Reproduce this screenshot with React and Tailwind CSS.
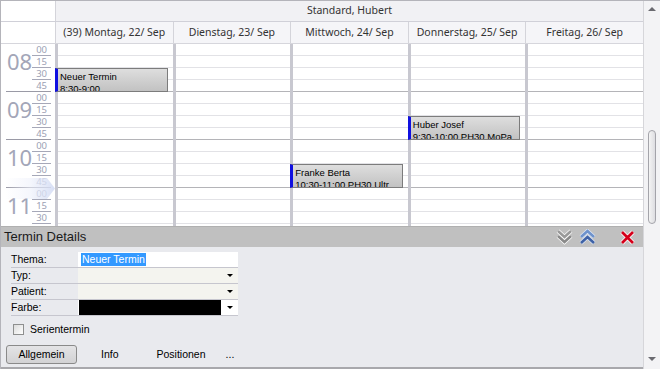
import React from "react";

const days = [
  "(39) Montag, 22/ Sep",
  "Dienstag, 23/ Sep",
  "Mittwoch, 24/ Sep",
  "Donnerstag, 25/ Sep",
  "Freitag, 26/ Sep",
];

// only the visible part of the day: 08:00 - 11:30
const hours = [
  { h: "08", m: ["00", "15", "30", "45"] },
  { h: "09", m: ["00", "15", "30", "45"] },
  { h: "10", m: ["00", "15", "30", "45"] },
  { h: "11", m: ["00", "15", "30"] },
];

// top offset in px from 08:00, 48px per hour
const appointments = [
  { day: 0, top: 24, title: "Neuer Termin", sub: "8:30-9:00" },
  { day: 2, top: 120, title: "Franke Berta", sub: "10:30-11:00 PH30 Ultr" },
  { day: 3, top: 72, title: "Huber Josef", sub: "9:30-10:00 PH30 MoPa" },
];

const head = { fontFamily: '"Noto Sans", "Open Sans", sans-serif' };
const ui = { fontFamily: '"Liberation Sans", Arial, sans-serif' };

const ChevronsDown = () => (
  <svg width="17" height="16" viewBox="0 0 17 16">
    <polyline points="2,2 8.5,8 15,2" fill="none" stroke="#ffffff" strokeWidth="4" />
    <polyline points="2,7 8.5,13 15,7" fill="none" stroke="#ffffff" strokeWidth="4" />
    <polyline points="2,2 8.5,8 15,2" fill="none" stroke="#9a9a9a" strokeWidth="2.6" />
    <polyline points="2,7 8.5,13 15,7" fill="none" stroke="#8a8a8a" strokeWidth="2.6" />
  </svg>
);

const ChevronsUp = () => (
  <svg width="17" height="16" viewBox="0 0 17 16">
    <polyline points="2,8 8.5,2 15,8" fill="none" stroke="#dfe8f6" strokeWidth="4" />
    <polyline points="2,14 8.5,8 15,14" fill="none" stroke="#dfe8f6" strokeWidth="4" />
    <polyline points="2,8 8.5,2 15,8" fill="none" stroke="#6f93cc" strokeWidth="2.6" />
    <polyline points="2,14 8.5,8 15,14" fill="none" stroke="#3f62a6" strokeWidth="2.6" />
  </svg>
);

const CloseX = () => (
  <svg width="15" height="15" viewBox="0 0 15 15">
    <path d="M2 2 L13 13 M13 2 L2 13" stroke="#ffffff" strokeWidth="4.4" />
    <path d="M2 2 L13 13 M13 2 L2 13" stroke="#d4001a" strokeWidth="2.8" />
  </svg>
);

const Arrow = () => (
  <span className="w-0 h-0 border-l-[3px] border-r-[3px] border-t-[3px] border-l-transparent border-r-transparent border-t-black" />
);

function TimeColumn() {
  return (
    <div className="relative w-[54px] bg-white">
      {hours.map(({ h, m }) => (
        <div
          key={h}
          className={
            "ml-[5px] mr-[4px] flex " +
            (m.length === 4 ? "h-[48px] border-b border-[#9a9aa6]" : "h-[40px]")
          }
        >
          <div
            className="w-[26px] pt-[6px] pl-[1px] text-[22px] leading-[22px] text-[#a3a6b8]"
            style={head}
          >
            {h}
          </div>
          <div className="flex-1 flex flex-col">
            {m.map((min, i) => (
              <div
                key={min}
                className={
                  "h-[12px] pr-[4px] text-right text-[9.5px] leading-[12px] text-[#9c9fb4] " +
                  (i < 3 ? "border-b border-[#a6a8b8]" : "")
                }
                style={head}
              >
                {min}
              </div>
            ))}
          </div>
        </div>
      ))}
      <div className="absolute left-[4px] top-[134px] h-[21px] w-[50px] bg-gradient-to-r from-white/0 via-[#eef1fb]/60 to-[#d4dcf4]/90 [clip-path:polygon(0_0,84%_0,100%_50%,84%_100%,0_100%)]" />
    </div>
  );
}

function DayColumn({ index }) {
  const rows = Array.from({ length: 16 });
  return (
    <div className="relative flex-1 border-l-[3px] border-[#c8c8d0] bg-white">
      {rows.map((_, i) => (
        <div
          key={i}
          className={
            "h-[12px] border-b " +
            (i % 4 === 3 ? "border-[#b4b4b8]" : "border-[#e2e2e6]")
          }
        />
      ))}
      {appointments
        .filter((a) => a.day === index)
        .map((a) => (
          <div
            key={a.title}
            className="absolute left-[-3px] right-[5px] h-[24px] overflow-hidden border border-l-[3px] border-[#7c7c7c] border-l-[#1010e0] bg-gradient-to-b from-[#dedede] to-[#c2c2c2] pl-[2px] pt-[2px] text-[9.5px] leading-[12px] text-black"
            style={{ top: a.top, ...ui }}
          >
            <div className="whitespace-nowrap">{a.title}</div>
            <div className="whitespace-nowrap">{a.sub}</div>
          </div>
        ))}
    </div>
  );
}

function Calendar() {
  return (
    <div className="flex h-[225px] flex-col">
      <div className="flex h-[21px] border-b border-[#d0d0d8]">
        <div className="w-[54px] bg-white" />
        <div
          className="flex flex-1 items-center justify-center border-l border-[#d4d4da] bg-[#f1f1f4] text-[10.5px] text-[#333]"
          style={head}
        >
          Standard, Hubert
        </div>
      </div>
      <div className="flex h-[22px] border-b border-[#d6d6dc]">
        <div className="w-[54px] bg-white" />
        {days.map((d) => (
          <div
            key={d}
            className="flex flex-1 items-center justify-center border-l border-[#d4d4da] bg-[#f5f5f8] text-[10.5px] text-[#333] whitespace-nowrap"
            style={head}
          >
            {d}
          </div>
        ))}
      </div>
      <div className="flex flex-1 overflow-hidden">
        <TimeColumn />
        {days.map((d, i) => (
          <DayColumn key={d} index={i} />
        ))}
      </div>
    </div>
  );
}

function FormRow({ label, children }) {
  return (
    <div className="flex h-[16px] border-b border-[#c6c6ce]">
      <div className="w-[67px] text-[10.5px] leading-[15px] text-black">{label}</div>
      <div className="flex flex-1">{children}</div>
    </div>
  );
}

function Details() {
  return (
    <div className="flex flex-1 flex-col border-b-2 border-[#a8a8ac] bg-[#e9eaee]" style={ui}>
      <div className="flex h-[21px] items-center border-t border-[#b0b0b0] bg-[#c0c0c0] pl-[3px] pr-[8px]">
        <div className="flex-1 text-[13px] text-[#1a1a1a]">Termin Details</div>
        <div className="flex items-center gap-[6px]">
          <ChevronsDown />
          <ChevronsUp />
        </div>
        <div className="ml-[24px] flex items-center">
          <CloseX />
        </div>
      </div>
      <div className="flex flex-col px-[5px] pt-[5px]">
        <div className="ml-[5px] w-[227px]">
          <FormRow label="Thema:">
            <div className="flex flex-1 items-center bg-white pl-[3px]">
              <span className="bg-[#3399ff] px-[1px] text-[10.5px] leading-[13px] text-white">
                Neuer Termin
              </span>
            </div>
          </FormRow>
          <FormRow label="Typ:">
            <div className="flex flex-1 items-center justify-end bg-[#f4f4ef] pr-[5px]">
              <Arrow />
            </div>
          </FormRow>
          <FormRow label="Patient:">
            <div className="flex flex-1 items-center justify-end bg-[#f4f4ef] pr-[5px]">
              <Arrow />
            </div>
          </FormRow>
          <FormRow label="Farbe:">
            <div className="flex flex-1 items-center bg-white pl-[1px]">
              <div className="h-[15px] w-[142px] bg-black" />
              <div className="flex flex-1 justify-center">
                <Arrow />
              </div>
            </div>
          </FormRow>
        </div>
        <div className="ml-[7px] mt-[7px] flex items-center gap-[6px]">
          <div className="h-[11px] w-[11px] border border-[#8e8f8f] bg-gradient-to-br from-[#dcdcdc] to-white" />
          <span className="text-[10.5px] leading-[12px] text-black">Serientermin</span>
        </div>
        <div className="mt-[10px] flex items-center text-[10.5px] text-black">
          <div className="flex h-[19px] w-[71px] items-center justify-center rounded-[3px] border border-[#8a8a8a] bg-gradient-to-b from-[#e4e4e6] to-[#d2d2d4]">
            Allgemein
          </div>
          <span className="ml-[24px]">Info</span>
          <span className="ml-[38px]">Positionen</span>
          <span className="ml-[20px]">...</span>
        </div>
      </div>
    </div>
  );
}

function Scrollbar() {
  return (
    <div className="flex w-[17px] flex-col items-center border-l border-[#d6d6da] bg-[#f3f3f5]">
      <div className="mt-[6px] h-0 w-0 border-b-[4px] border-l-[4px] border-r-[4px] border-b-[#6a6a70] border-l-transparent border-r-transparent" />
      <div className="mt-[119px] h-[94px] w-[8px] rounded-full border border-[#a4a4aa] bg-gradient-to-r from-[#f4f4f4] to-[#dedee2]" />
      <div className="flex-1" />
      <div className="mb-[8px] h-0 w-0 border-l-[4px] border-r-[4px] border-t-[4px] border-l-transparent border-r-transparent border-t-[#6a6a70]" />
    </div>
  );
}

export default function App() {
  return (
    <div className="flex h-[369px] w-[660px] overflow-hidden border-t border-l border-[#b4b4ba] bg-white">
      <div className="flex w-[642px] flex-col">
        <Calendar />
        <Details />
      </div>
      <Scrollbar />
    </div>
  );
}
